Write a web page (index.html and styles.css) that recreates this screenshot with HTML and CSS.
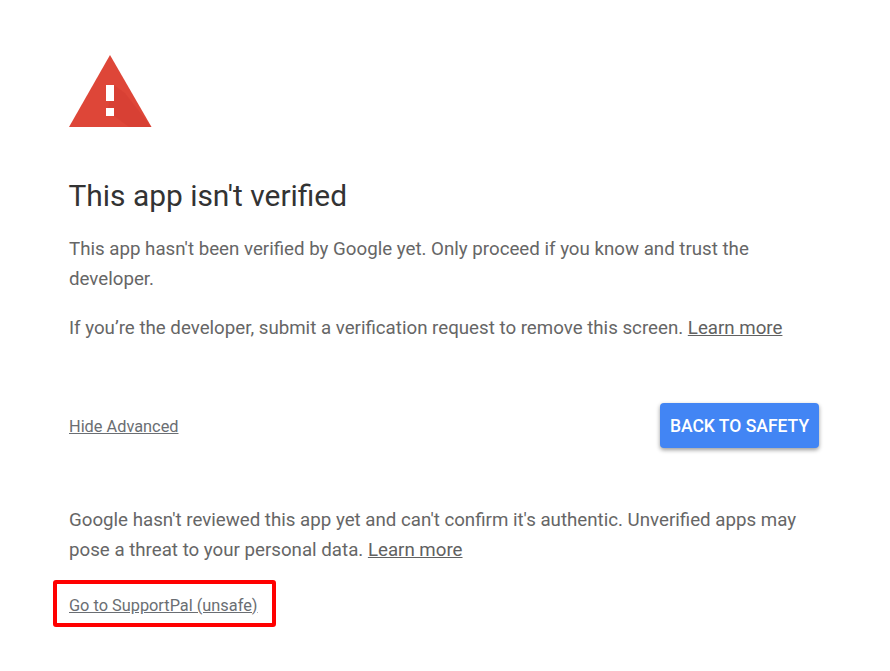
FILE: index.html
```html
<!DOCTYPE html>
<html lang="en">
<head>
<meta charset="utf-8">
<title>This app isn't verified</title>
<link rel="stylesheet" href="styles.css">
</head>
<body>
<main class="page">
  <svg class="warn" width="84" height="72" viewBox="0 0 84 72" aria-hidden="true">
    <path d="M41 0 L82.5 72 H0 Z" fill="#de4638"/>
    <path d="M45 30 L56 38 L82.5 72 H60 L38 56 Z" fill="#b8281f" opacity="0.16"/>
    <rect x="37" y="30" width="8" height="16" fill="#fff"/>
    <rect x="37" y="53" width="8" height="8" fill="#fff"/>
  </svg>
  <h1 class="title">This app isn't verified</h1>
  <p class="text first">This app hasn't been verified by Google yet. Only proceed if you know and trust the developer.</p>
  <p class="text second">If you’re the developer, submit a verification request to remove this screen. <a class="link" href="#">Learn more</a></p>
  <div class="actions">
    <a class="small-link hide-link" href="#">Hide Advanced</a>
    <button class="primary" type="button">BACK TO SAFETY</button>
  </div>
  <p class="text third">Google hasn't reviewed this app yet and can't confirm it's authentic. Unverified apps may pose a threat to your personal data. <a class="link" href="#">Learn more</a></p>
  <div class="unsafe-box"><a class="small-link" href="#">Go to SupportPal (unsafe)</a></div>
</main>
</body>
</html>
```
FILE: styles.css
```css
html, body { margin: 0; padding: 0; background: #fff; }
body { font-family: Roboto, "Liberation Sans", sans-serif; color: #616161; }
.page { width: 750px; padding: 55px 0 0 69px; }
.warn { display: block; margin: 0; }
.title { margin: 51px 0 0 -0.5px; font-size: 29.9px; font-weight: 400; line-height: 36px; color: #333; }
.text { margin: 0; font-size: 18.72px; line-height: 30px; color: #666; }
.first { margin-top: 20px; }
.second { margin-top: 19px; }
.link { color: #616161; text-decoration: underline; }
.actions { display: flex; justify-content: space-between; align-items: center; margin-top: 60px; }
.small-link { font-size: 16.33px; color: #6a6e73; text-decoration: underline; }
.hide-link { margin-top: 2px; }
.primary { width: 159px; height: 45px; border: 0; border-radius: 4px; background: #4285f4; color: #fff; font: 500 17.5px Roboto, sans-serif; padding: 0; box-shadow: 0 2px 4px rgba(0,0,0,.4); }
.third { margin-top: 57px; }
.unsafe-box { box-sizing: border-box; width: 223px; height: 47px; margin: 15px 0 0 -16px; padding: 3px 0 0 12px; display: flex; align-items: center; border: 4px solid #f00; border-radius: 3px; }
```
